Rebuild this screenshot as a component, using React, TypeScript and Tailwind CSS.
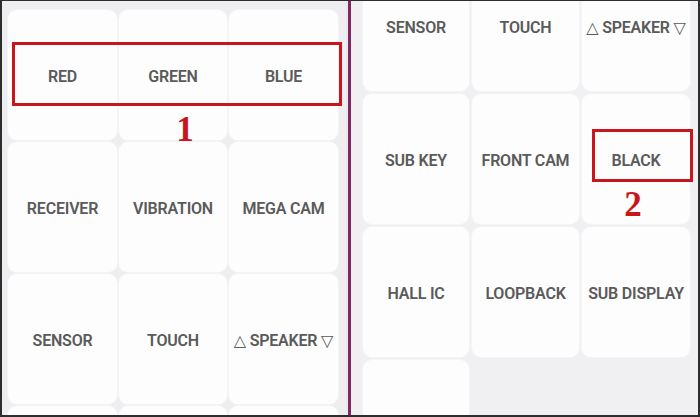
import React from 'react';

const leftRows = [
  ['RED', 'GREEN', 'BLUE'],
  ['RECEIVER', 'VIBRATION', 'MEGA CAM'],
  ['SENSOR', 'TOUCH', '△ SPEAKER ▽'],
  ['', '', ''],
];

const rightRows = [
  ['SENSOR', 'TOUCH', '△ SPEAKER ▽'],
  ['SUB KEY', 'FRONT CAM', 'BLACK'],
  ['HALL IC', 'LOOPBACK', 'SUB DISPLAY'],
  [''],
];

function Tile({ label }: { label: string }) {
  return (
    <div className="flex items-center justify-center rounded-[9px] bg-[#fdfdfd] pt-[3px] shadow-[0_0_0_1px_#f4f4f6]">
      <span className="whitespace-nowrap text-[16px] font-semibold tracking-[-0.2px] text-[#5a5a5a]">{label}</span>
    </div>
  );
}

export default function App() {
  return (
    <div
      className="relative flex h-[417px] w-[700px] overflow-hidden border-t border-r-2 border-b-2 border-l-2 border-[#2d2d2d] bg-[#efeff1]"
      style={{ fontFamily: 'Roboto, "Noto Sans", "DejaVu Sans", sans-serif' }}
    >
      {/* left screen */}
      <div className="h-full w-[346px] shrink-0 overflow-hidden border-r-2 border-[#f3e4ee] bg-[#eeeef0] pt-[9px] pl-[6px]">
        <div className="grid grid-cols-[109px_108px_109px] auto-rows-[130px] gap-[2px]">
          {leftRows.flat().map((label, i) => (
            <Tile key={`l-${i}`} label={label} />
          ))}
        </div>
      </div>

      {/* right screen */}
      <div className="h-full flex-1 overflow-hidden border-l-[3px] border-[#7b2a62] bg-[#f0f0f2] pl-[12px]">
        <div className="-mt-[40px] grid grid-cols-[106px_107px_108px] auto-rows-[130px] gap-x-[3px] gap-y-[3px]">
          {rightRows.flat().map((label, i) => (
            <Tile key={`r-${i}`} label={label} />
          ))}
        </div>
      </div>

      {/* annotations */}
      <div className="absolute left-[10px] top-[41px] h-[64px] w-[330px] border-[3px] border-[#c8161c]" />
      <div className="absolute left-[168px] top-[111px] w-[30px] text-center font-['Liberation_Serif',serif] text-[35px] font-bold leading-none text-[#c8161c]">
        1
      </div>
      <div className="absolute left-[590px] top-[128px] h-[53px] w-[101px] border-[3px] border-[#c8161c]" />
      <div className="absolute left-[616px] top-[186px] w-[30px] text-center font-['Liberation_Serif',serif] text-[35px] font-bold leading-none text-[#c8161c]">
        2
      </div>
    </div>
  );
}
